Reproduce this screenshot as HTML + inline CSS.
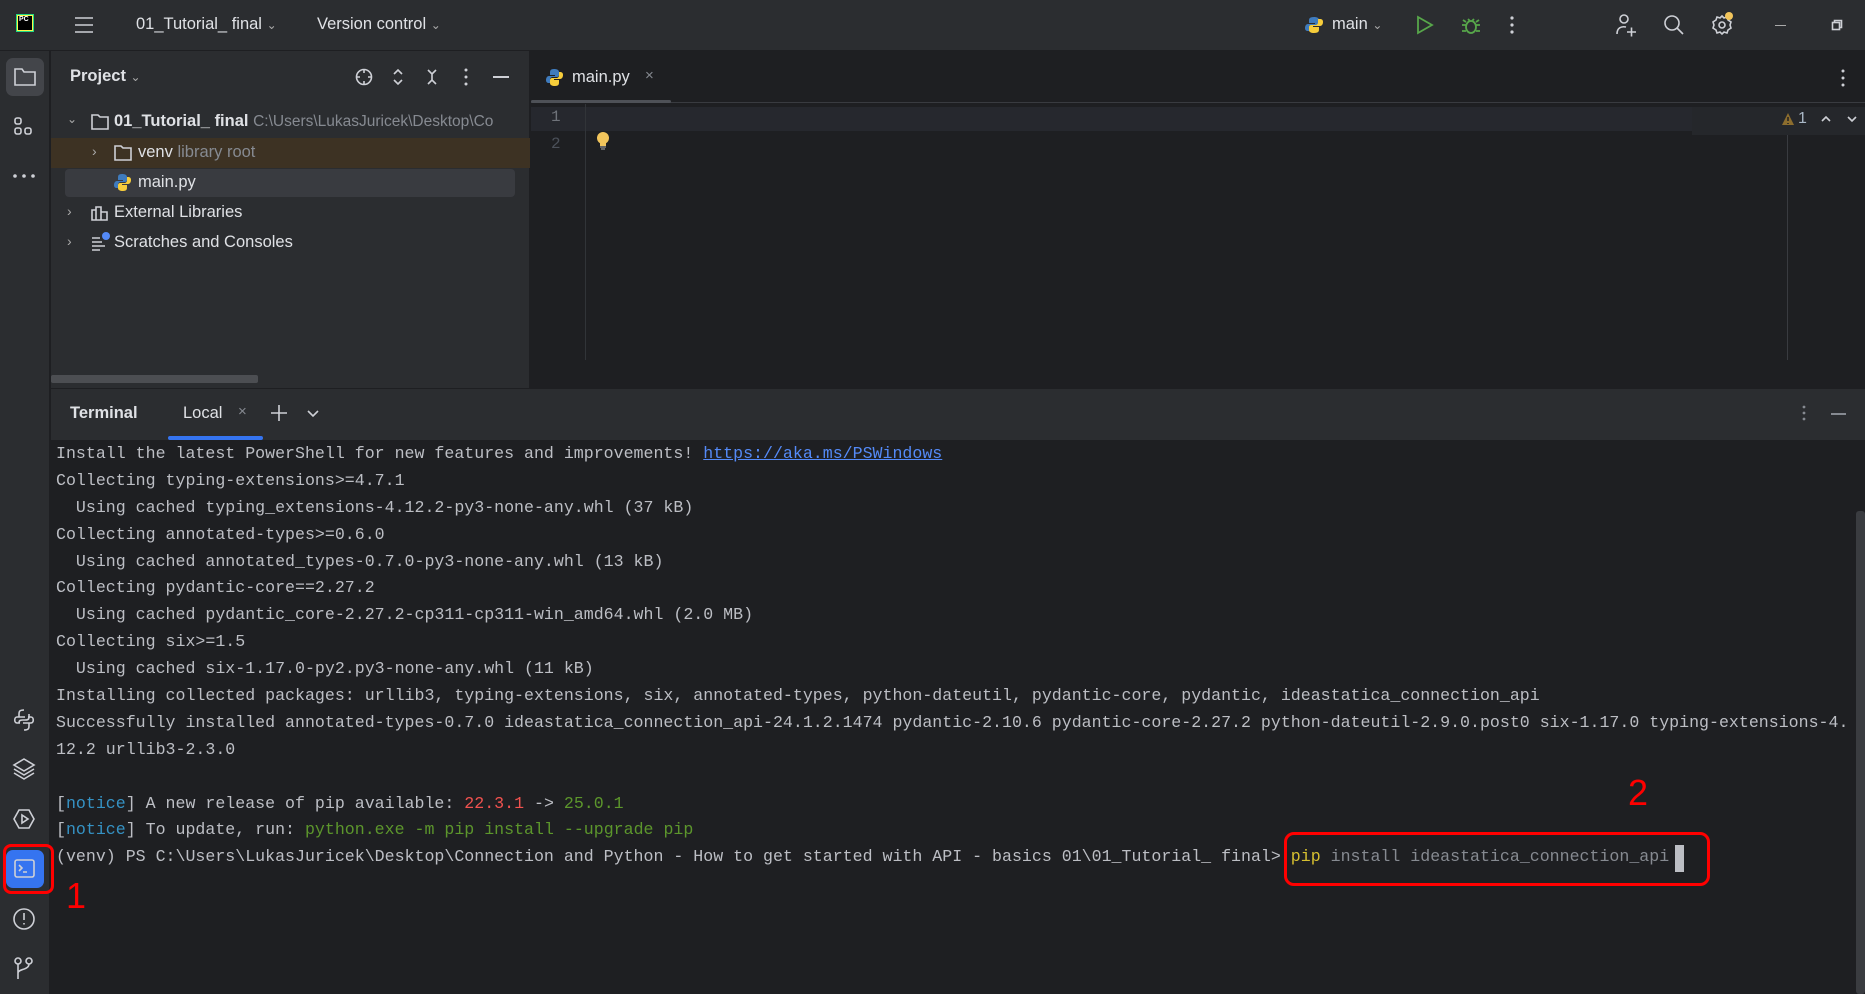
<!DOCTYPE html>
<html><head><meta charset="utf-8"><style>
*{margin:0;padding:0;box-sizing:border-box}
body{width:1865px;height:994px;background:#1e1f22;font-family:"Liberation Sans",sans-serif;color:#dfe1e5;position:relative;overflow:hidden;font-size:16px}
.a{position:absolute}
.mono{font-family:"Liberation Mono",monospace}
.term div{height:26.9px;line-height:26.9px;white-space:pre;font-size:16.6px;color:#bcbec4}
svg{position:absolute;overflow:visible}
.ic{stroke:#ced0d6;fill:none;stroke-width:1.6}
</style></head><body>
<!-- title bar -->
<div class="a" style="left:0;top:0;width:1865px;height:51px;background:#2b2d30;border-bottom:1px solid #1e1f22"></div>
<div class="a" style="left:16px;top:14px;width:18px;height:18px;background:#21d789;"></div>
<div class="a" style="left:17px;top:15px;width:16px;height:16px;background:#fcf84a"></div>
<div class="a" style="left:18px;top:16px;width:14px;height:14px;background:#000;color:#fff;font-size:7px;font-weight:bold;line-height:8px;padding-left:1px">PC</div>
<svg class="ic" style="left:74px;top:16px" width="20" height="18"><path d="M1 2H19M1 9H19M1 16H19"/></svg>
<div class="a" style="left:136px;top:15px;font-size:16.5px">01_Tutorial_ final <span style="font-size:12px;color:#aaa">&#8964;</span></div>
<div class="a" style="left:317px;top:15px;font-size:16.5px">Version control <span style="font-size:12px;color:#aaa">&#8964;</span></div>
<svg style="left:1305px;top:16px" width="18" height="18"><path d="M9 1C4 1 4 3 4 5V7H10V8H3C1 8 0 10 0 12S1 15 3 15H5V12C5 10 6 9 8 9H12C13 9 14 8 14 7V4C14 2 12 1 9 1Z" fill="#3f7bbd"/><path d="M9 17C14 17 14 15 14 13V11H8V10H15C17 10 18 8 18 6S17 3 15 3H13V6C13 8 12 9 10 9H6C5 9 4 10 4 11V14C4 16 6 17 9 17Z" fill="#f7cd3b"/></svg>
<div class="a" style="left:1332px;top:15px;font-size:16.5px">main <span style="font-size:12px;color:#aaa">&#8964;</span></div>
<svg style="left:1416px;top:16px" width="18" height="18"><path d="M2 1L16 9L2 17Z" fill="none" stroke="#57a64a" stroke-width="1.8"/></svg>
<svg style="left:1461px;top:15px" width="20" height="20" fill="none" stroke="#57a64a" stroke-width="1.8"><ellipse cx="10" cy="12" rx="5" ry="6"/><path d="M7 4L9 6M13 4L11 6M1 10H5M15 10H19M1 16H5M15 16H19M5 7L2 5M15 7L18 5"/></svg>
<svg style="left:1510px;top:15px" width="4" height="20" fill="#ced0d6"><circle cx="2" cy="3" r="1.6"/><circle cx="2" cy="10" r="1.6"/><circle cx="2" cy="17" r="1.6"/></svg>
<svg class="ic" style="left:1614px;top:13px" width="24" height="24"><circle cx="10" cy="6" r="4"/><path d="M3 21C3 15 7 13 12 14M13 19H22M17.5 14.5V23.5"/></svg>
<svg class="ic" style="left:1663px;top:14px" width="22" height="22" stroke-width="1.8"><circle cx="9" cy="9" r="7"/><path d="M14 14L20 20"/></svg>
<svg class="ic" style="left:1711px;top:13px" width="24" height="24"><circle cx="11" cy="12" r="3"/><path d="M11 3L13 5L16 4L17 7L20 9L19 12L20 15L17 17L16 20L13 19L11 21L9 19L6 20L5 17L2 15L3 12L2 9L5 7L6 4L9 5Z"/></svg>
<div class="a" style="left:1725px;top:12px;width:8px;height:8px;border-radius:50%;background:#f2c55c"></div>
<div class="a" style="left:1775px;top:25px;width:11px;height:1px;background:#aaa"></div>
<svg class="ic" style="left:1832px;top:20px" width="11" height="11" stroke-width="1" stroke="#aaa"><rect x="0.5" y="2.5" width="7" height="7"/><path d="M2.5 2.5V0.5H9.5V7.5H7.5"/></svg>

<!-- left strip -->
<div class="a" style="left:0;top:51px;width:50px;height:943px;background:#2b2d30;border-right:1px solid #1e1f22"></div>
<div class="a" style="left:6px;top:58px;width:38px;height:38px;border-radius:7px;background:#43454a"></div>
<svg class="ic" style="left:14px;top:67px" width="22" height="20"><path d="M1 2H8L10 5H21V18H1Z"/></svg>
<svg class="ic" style="left:14px;top:117px" width="20" height="20"><rect x="1" y="1" width="6" height="6" rx="2"/><rect x="1" y="11" width="6" height="6" rx="2"/><rect x="11" y="11" width="6" height="6" rx="2"/></svg>
<svg style="left:13px;top:174px" width="24" height="4" fill="#ced0d6"><circle cx="2" cy="2" r="1.8"/><circle cx="11" cy="2" r="1.8"/><circle cx="20" cy="2" r="1.8"/></svg>
<svg class="ic" style="left:13px;top:709px" width="22" height="22"><path d="M11 1C6 1 6 3 6 5V8H12M11 21C16 21 16 19 16 17V14H10M6 8H4C1 8 1 14 4 14H7M16 14H18C21 14 21 8 18 8H15M6 14C6 11 8 11 10 11H12C14 11 16 11 16 8V5"/></svg>
<svg class="ic" style="left:13px;top:758px" width="22" height="22"><path d="M11 1L21 7L11 13L1 7Z M1 11L11 17L21 11M1 15L11 21L21 15"/></svg>
<svg class="ic" style="left:13px;top:808px" width="22" height="22"><path d="M6 2H16L21 11L16 20H6L1 11Z"/><path d="M9 7L15 11L9 15Z"/></svg>
<div class="a" style="left:6px;top:850px;width:38px;height:38px;border-radius:7px;background:#3574f0"></div>
<svg class="ic" style="left:14px;top:859px" width="22" height="20" stroke="#fff"><rect x="1" y="1" width="19" height="17" rx="2"/><path d="M5 6L8 9L5 12M9 13H13"/></svg>
<div class="a" style="left:3px;top:844px;width:51px;height:50px;border:3px solid #ff0000;border-radius:8px"></div>
<svg class="ic" style="left:13px;top:908px" width="22" height="22"><circle cx="11" cy="11" r="10"/><path d="M11 5V12M11 15V16.5"/></svg>
<svg class="ic" style="left:14px;top:957px" width="22" height="24"><circle cx="4" cy="4" r="3"/><circle cx="15" cy="4" r="3"/><path d="M4 7V22M15 7C15 13 4 12 4 16"/></svg>
<div class="a" style="left:66px;top:875px;color:#ff0000;font-size:36px">1</div>

<!-- project panel -->
<div class="a" style="left:51px;top:51px;width:479px;height:337px;background:#2b2d30;border-right:1px solid #1e1f22"></div>
<div class="a" style="left:70px;top:67px;font-size:16.5px;font-weight:bold">Project <span style="font-size:12px;color:#aaa;font-weight:normal">&#8964;</span></div>
<svg class="ic" style="left:355px;top:68px" width="18" height="18" stroke-width="1.4"><circle cx="9" cy="9" r="7.5"/><path d="M9 1V5M9 13V17M1 9H5M13 9H17"/></svg>
<svg class="ic" style="left:392px;top:69px" width="12" height="16" stroke-width="1.4"><path d="M2 5L6 1L10 5M2 11L6 15L10 11"/></svg>
<svg class="ic" style="left:426px;top:69px" width="12" height="16" stroke-width="1.4"><path d="M2 1L6 5L10 1M2 15L6 11L10 15M6 5V11"/></svg>
<svg style="left:464px;top:68px" width="4" height="18" fill="#ced0d6"><circle cx="2" cy="2" r="1.5"/><circle cx="2" cy="9" r="1.5"/><circle cx="2" cy="16" r="1.5"/></svg>
<div class="a" style="left:493px;top:76px;width:16px;height:1.5px;background:#ced0d6"></div>
<div class="a" style="left:51px;top:138px;width:479px;height:30px;background:#3d3223"></div>
<div class="a" style="left:65px;top:169px;width:450px;height:28px;background:#393b40;border-radius:4px"></div>
<div class="a" style="left:67px;top:112px;font-size:12px;color:#aaa">&#8964;</div>
<svg class="ic" style="left:91px;top:114px" width="18" height="16" stroke-width="1.3" stroke="#aaa"><path d="M1 1H7L9 3H17V15H1Z"/></svg>
<div class="a" style="left:114px;top:112px;font-size:16.5px;font-weight:bold">01_Tutorial_ final <span style="font-weight:normal;color:#868a91;font-size:15.5px">C:\Users\LukasJuricek\Desktop\Co</span></div>
<div class="a" style="left:51px;top:112px;width:479px;height:20px;overflow:hidden;pointer-events:none"></div>
<div class="a" style="left:92px;top:143px;font-size:14px;color:#aaa">&#8250;</div>
<svg class="ic" style="left:114px;top:145px" width="18" height="16" stroke-width="1.3" stroke="#aaa"><path d="M1 1H7L9 3H17V15H1Z"/></svg>
<div class="a" style="left:138px;top:143px;font-size:16.5px">venv <span style="color:#868a91">library root</span></div>
<svg style="left:114px;top:174px" width="17" height="17"><path d="M8 0C4 0 4 2 4 4V6H9V7H3C1 7 0 9 0 11S1 14 3 14H4V11C4 9 5 8 7 8H11C12 8 13 7 13 6V3C13 1 11 0 8 0Z" fill="#3f7bbd"/><path d="M9 17C13 17 13 15 13 13V11H8V10H14C16 10 17 8 17 6S16 3 14 3H13V6C13 8 12 9 10 9H6C5 9 4 10 4 11V14C4 16 6 17 9 17Z" fill="#f7cd3b"/></svg>
<div class="a" style="left:138px;top:173px;font-size:16.5px">main.py</div>
<div class="a" style="left:67px;top:203px;font-size:14px;color:#aaa">&#8250;</div>
<svg class="ic" style="left:91px;top:205px" width="18" height="16" stroke-width="1.3" stroke="#aaa"><path d="M1 5H5V15H1ZM5 2H10V15H5ZM10 7H16V15H10Z"/></svg>
<div class="a" style="left:114px;top:203px;font-size:16.5px">External Libraries</div>
<div class="a" style="left:67px;top:233px;font-size:14px;color:#aaa">&#8250;</div>
<svg class="ic" style="left:91px;top:234px" width="20" height="17" stroke-width="1.3" stroke="#aaa"><path d="M1 4H9M1 8H11M1 12H14M1 16H9"/></svg>
<div class="a" style="left:102px;top:232px;width:8px;height:8px;border-radius:50%;background:#548af7"></div>
<div class="a" style="left:114px;top:233px;font-size:16.5px">Scratches and Consoles</div>
<div class="a" style="left:51px;top:375px;width:207px;height:8px;background:#4c4e52;border-radius:2px"></div>

<!-- editor -->
<div class="a" style="left:531px;top:51px;width:1334px;height:52px;background:#1e1f22;border-bottom:1px solid #393b40"></div>
<svg style="left:546px;top:69px" width="17" height="17"><path d="M8 0C4 0 4 2 4 4V6H9V7H3C1 7 0 9 0 11S1 14 3 14H4V11C4 9 5 8 7 8H11C12 8 13 7 13 6V3C13 1 11 0 8 0Z" fill="#3f7bbd"/><path d="M9 17C13 17 13 15 13 13V11H8V10H14C16 10 17 8 17 6S16 3 14 3H13V6C13 8 12 9 10 9H6C5 9 4 10 4 11V14C4 16 6 17 9 17Z" fill="#f7cd3b"/></svg>
<div class="a" style="left:572px;top:68px;font-size:16.5px">main.py</div>
<div class="a" style="left:645px;top:67px;font-size:15px;color:#868a91">×</div>
<div class="a" style="left:531px;top:100px;width:140px;height:3px;background:#4e5157;border-radius:2px"></div>
<svg style="left:1841px;top:69px" width="4" height="18" fill="#ced0d6"><circle cx="2" cy="2" r="1.5"/><circle cx="2" cy="9" r="1.5"/><circle cx="2" cy="16" r="1.5"/></svg>
<div class="a" style="left:531px;top:107px;width:1256px;height:24px;background:#26282e"></div>
<div class="a" style="left:585px;top:104px;width:1px;height:256px;background:#313438"></div>
<div class="a" style="left:1787px;top:135px;width:1px;height:225px;background:#393b40"></div>
<div class="a" style="left:1692px;top:107px;width:173px;height:28px;background:#25272b"></div>
<div class="a mono" style="left:551px;top:108px;font-size:16px;color:#6f737a">1</div>
<div class="a mono" style="left:551px;top:135px;font-size:16px;color:#4b5059">2</div>
<svg style="left:596px;top:131px" width="14" height="20"><circle cx="7" cy="7" r="6" fill="#f2c55c"/><rect x="4" y="11" width="6" height="4" fill="#f2c55c"/><path d="M4 16H10M5 18H9" stroke="#aaa"/></svg>
<svg style="left:1781px;top:112px" width="14" height="14"><path d="M7 1L13 13H1Z" fill="#8c6d2e"/><path d="M7 5V9M7 11V12" stroke="#1e1f22" stroke-width="1.5"/></svg>
<div class="a" style="left:1798px;top:110px;font-size:16px;color:#a9b7c6">1</div>
<svg class="ic" style="left:1821px;top:115px" width="10" height="8" stroke-width="1.3"><path d="M1 6L5 2L9 6"/></svg>
<svg class="ic" style="left:1847px;top:115px" width="10" height="8" stroke-width="1.3"><path d="M1 2L5 6L9 2"/></svg>

<!-- terminal -->
<div class="a" style="left:51px;top:388px;width:1814px;height:52px;background:#2b2d30;border-top:1px solid #1e1f22"></div>
<div class="a" style="left:70px;top:404px;font-size:16.5px;font-weight:bold">Terminal</div>
<div class="a" style="left:183px;top:404px;font-size:16.5px">Local</div>
<div class="a" style="left:238px;top:403px;font-size:15px;color:#868a91">×</div>
<svg class="ic" style="left:271px;top:405px" width="16" height="16" stroke-width="1.3" stroke="#868a91"><path d="M8 0V16M0 8H16"/></svg>
<svg class="ic" style="left:307px;top:410px" width="12" height="7" stroke-width="1.3" stroke="#868a91"><path d="M1 1L6 6L11 1"/></svg>
<div class="a" style="left:168px;top:436px;width:95px;height:4px;background:#3574f0;border-radius:2px"></div>
<svg style="left:1802px;top:405px" width="4" height="16" fill="#868a91"><circle cx="2" cy="2" r="1.4"/><circle cx="2" cy="8" r="1.4"/><circle cx="2" cy="14" r="1.4"/></svg>
<div class="a" style="left:1831px;top:413px;width:15px;height:1.5px;background:#868a91"></div>
<div class="a" style="left:1856px;top:511px;width:9px;height:483px;background:#3a3c40;border-radius:3px"></div>

<div class="a term mono" style="left:56px;top:441px">
<div>Install the latest PowerShell for new features and improvements! <span style="color:#548af7;text-decoration:underline">https://aka.ms/PSWindows</span></div>
<div>Collecting typing-extensions&gt;=4.7.1</div>
<div>  Using cached typing_extensions-4.12.2-py3-none-any.whl (37 kB)</div>
<div>Collecting annotated-types&gt;=0.6.0</div>
<div>  Using cached annotated_types-0.7.0-py3-none-any.whl (13 kB)</div>
<div>Collecting pydantic-core==2.27.2</div>
<div>  Using cached pydantic_core-2.27.2-cp311-cp311-win_amd64.whl (2.0 MB)</div>
<div>Collecting six&gt;=1.5</div>
<div>  Using cached six-1.17.0-py2.py3-none-any.whl (11 kB)</div>
<div>Installing collected packages: urllib3, typing-extensions, six, annotated-types, python-dateutil, pydantic-core, pydantic, ideastatica_connection_api</div>
<div>Successfully installed annotated-types-0.7.0 ideastatica_connection_api-24.1.2.1474 pydantic-2.10.6 pydantic-core-2.27.2 python-dateutil-2.9.0.post0 six-1.17.0 typing-extensions-4.</div>
<div>12.2 urllib3-2.3.0</div>
<div> </div>
<div>[<span style="color:#3592c4">notice</span>] A new release of pip available: <span style="color:#f0524f">22.3.1</span> -&gt; <span style="color:#5c962c">25.0.1</span></div>
<div>[<span style="color:#3592c4">notice</span>] To update, run: <span style="color:#5c962c">python.exe -m pip install --upgrade pip</span></div>
<div>(venv) PS C:\Users\LukasJuricek\Desktop\Connection and Python - How to get started with API - basics 01\01_Tutorial_ final&gt; <span style="color:#d6bf30">pip</span><span style="color:#868a91"> install ideastatica_connection_api</span></div>
</div>
<div class="a" style="left:1675px;top:845px;width:9px;height:27px;background:#bcbec4"></div>
<div class="a" style="left:1284px;top:832px;width:426px;height:54px;border:3px solid #ff0000;border-radius:10px"></div>
<div class="a" style="left:1628px;top:772px;color:#ff0000;font-size:36px">2</div>
</body></html>
